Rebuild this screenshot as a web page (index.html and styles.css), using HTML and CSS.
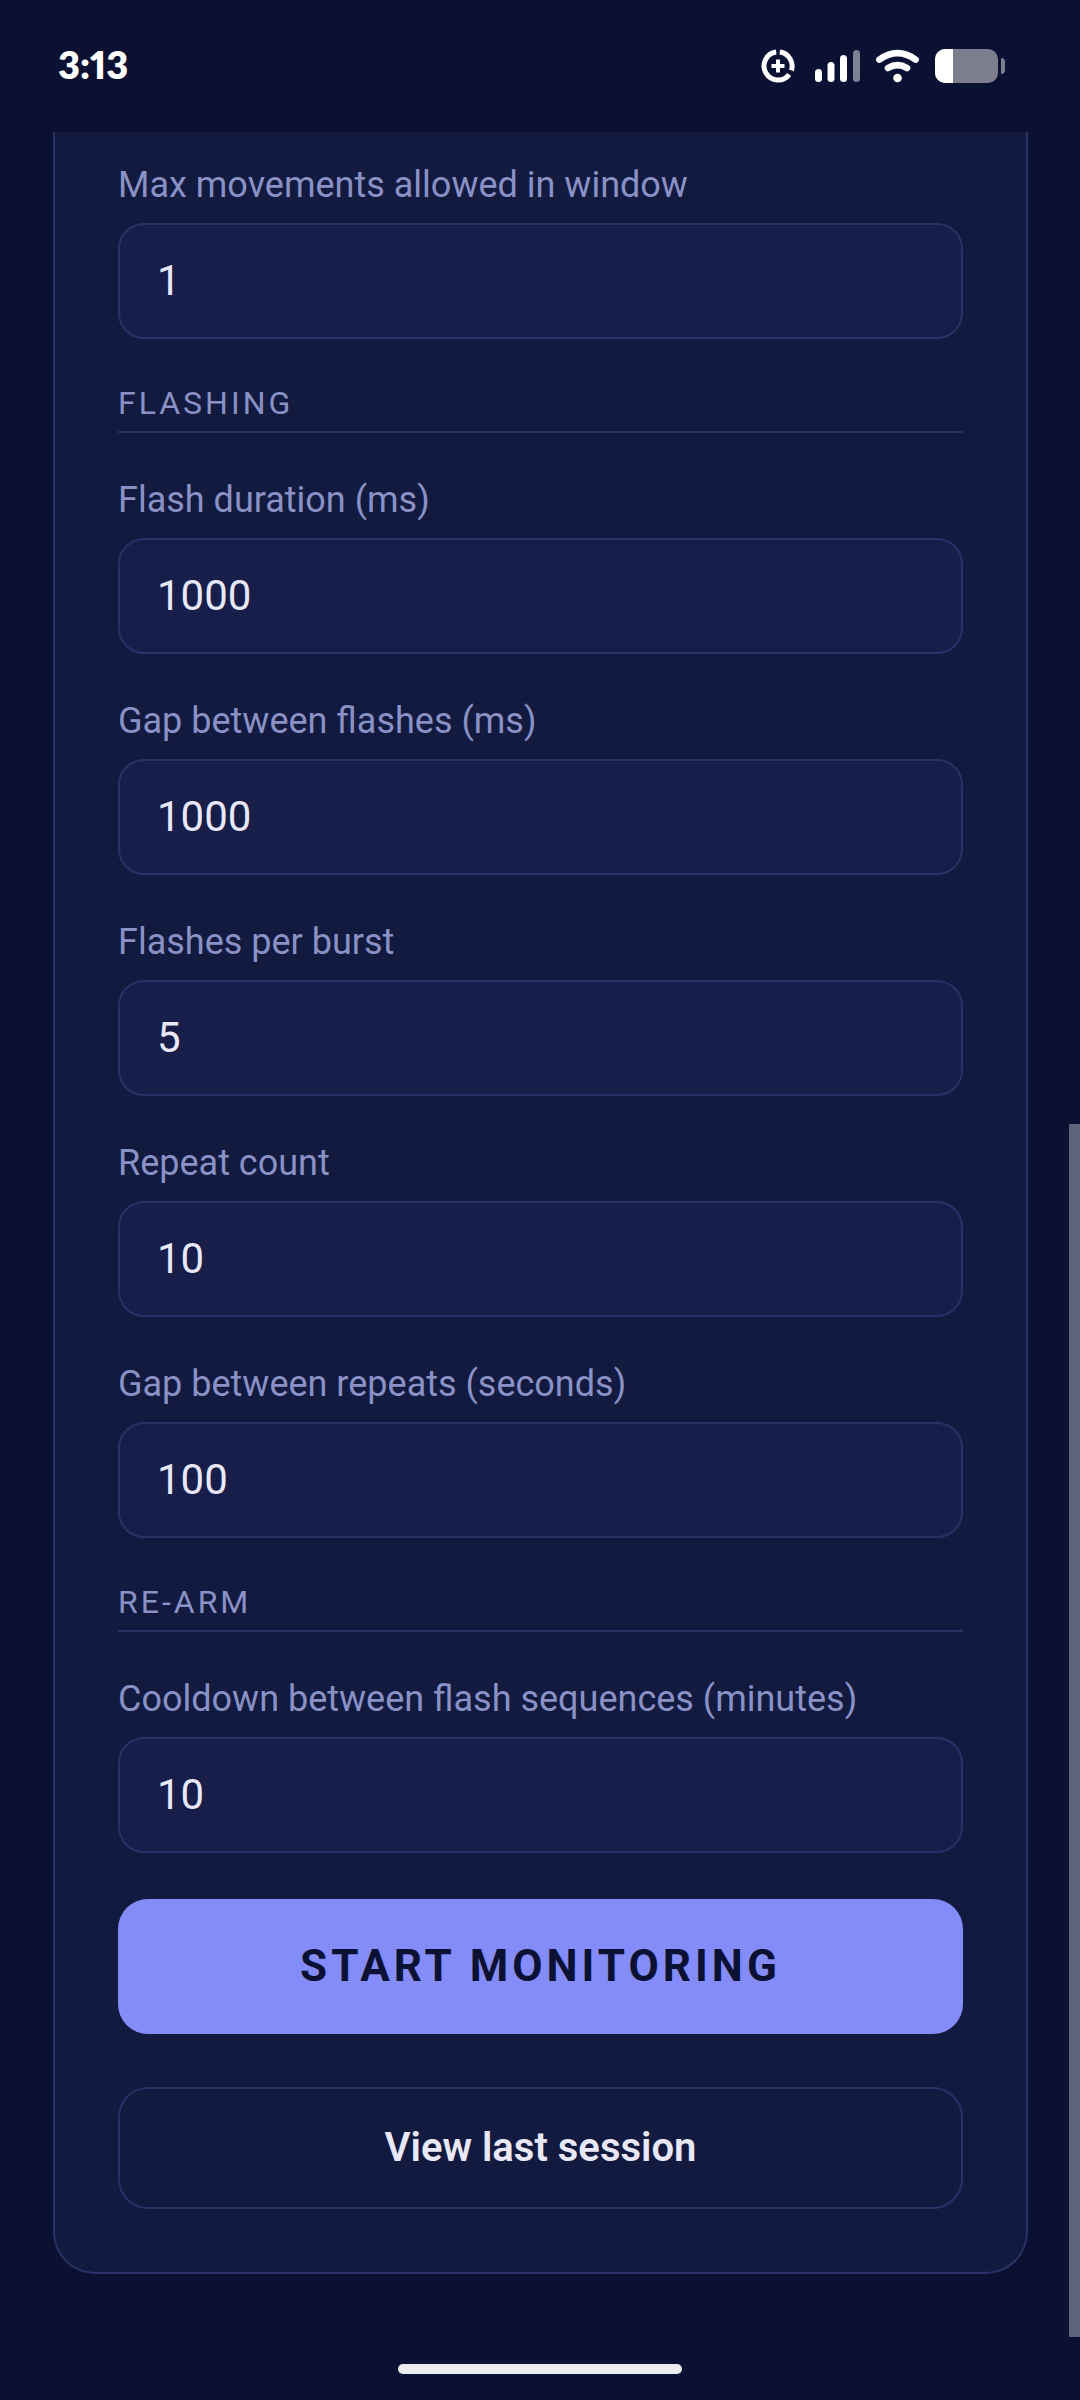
FILE: index.html
```html
<!DOCTYPE html>
<html lang="en">
<head>
<meta charset="UTF-8">
<meta name="viewport" content="width=device-width, initial-scale=1.0">
<title>Monitor settings</title>
<link rel="stylesheet" href="styles.css">
</head>
<body>

<header class="status-bar">
  <time class="clock">3:13</time>
  <div class="status-icons">
    <svg class="icon-saver" width="34" height="34" viewBox="0 0 34 34" fill="none" stroke="#fff">
      <path d="M18.8 3.1A14 14 0 0 1 30.4 21.4" stroke-width="5"/>
      <path d="M28.2 25.4A14 14 0 1 1 15.2 3.1" stroke-width="5"/>
      <path d="M17 10.5v13M10.5 17h13" stroke-width="4"/>
    </svg>
    <svg class="icon-signal" width="45" height="34" viewBox="0 0 45 34" fill="#fff">
      <rect x="0" y="20" width="7" height="13" rx="3.5"/>
      <rect x="12.5" y="13" width="7" height="20" rx="3.5"/>
      <rect x="25" y="6" width="7" height="27" rx="3.5"/>
      <rect x="38" y="1" width="7" height="32" rx="3.5" opacity=".47"/>
    </svg>
    <svg class="icon-wifi" width="43" height="34" viewBox="0 0 43 34" fill="none" stroke="#fff" stroke-linecap="round">
      <path d="M3.4 10.6Q21.5-2.2 39.6 10.6" stroke-width="6.6"/>
      <path d="M12 19Q21.5 13.2 31 19" stroke-width="6.6"/>
      <circle cx="21.5" cy="29" r="4.3" fill="#fff" stroke="none"/>
    </svg>
    <svg class="icon-battery" width="70" height="34" viewBox="0 0 70 34">
      <rect width="63" height="34" rx="10" fill="#7c7e8e"/>
      <path d="M18 0H10A10 10 0 0 0 0 10V24A10 10 0 0 0 10 34H18Z" fill="#fff"/>
      <path d="M66 9Q70 9 70 13V21Q70 25 66 25Z" fill="#7c7e8e"/>
    </svg>
  </div>
</header>

<main class="content">
  <form class="card">
    <div class="field">
      <label for="max-movements">Max movements allowed in window</label>
      <input type="text" inputmode="numeric" id="max-movements" value="1">
    </div>

    <h2 class="section">Flashing</h2>
    <div class="field">
      <label for="flash-duration">Flash duration (ms)</label>
      <input type="text" inputmode="numeric" id="flash-duration" value="1000">
    </div>
    <div class="field">
      <label for="flash-gap">Gap between flashes (ms)</label>
      <input type="text" inputmode="numeric" id="flash-gap" value="1000">
    </div>
    <div class="field">
      <label for="flash-count">Flashes per burst</label>
      <input type="text" inputmode="numeric" id="flash-count" value="5">
    </div>
    <div class="field">
      <label for="repeat-count">Repeat count</label>
      <input type="text" inputmode="numeric" id="repeat-count" value="10">
    </div>
    <div class="field">
      <label for="repeat-gap">Gap between repeats (seconds)</label>
      <input type="text" inputmode="numeric" id="repeat-gap" value="100">
    </div>

    <h2 class="section">Re-arm</h2>
    <div class="field">
      <label for="cooldown">Cooldown between flash sequences (minutes)</label>
      <input type="text" inputmode="numeric" id="cooldown" value="10">
    </div>

    <div class="actions">
      <button type="button" class="btn btn-primary">Start monitoring</button>
      <button type="button" class="btn btn-ghost">View last session</button>
    </div>
  </form>
  <div class="scroll-thumb"></div>
</main>

<footer class="nav-bar">
  <div class="nav-handle"></div>
</footer>

</body>
</html>
```

FILE: styles.css
```css
* {
  box-sizing: border-box;
}
:root {
  --bg: #0b1132;
  --card: #121a40;
  --input: #171e49;
  --border: #2a3166;
  --muted: #8a91c4;
  --text: #e8e8f8;
  --accent: #838cf8;
}
body {
  margin: 0;
  min-height: 100vh;
  display: flex;
  flex-direction: column;
  background: var(--bg);
  color: var(--text);
  font-family: Roboto, sans-serif;
}

/* Status bar */
.status-bar {
  display: flex;
  align-items: center;
  justify-content: space-between;
  height: 132px;
  padding: 0 75px 0 58px;
}
.clock {
  padding-bottom: 4px;
  color: #fff;
  font-family: Lato, sans-serif;
  font-size: 38px;
  font-weight: 800;
  font-variant-numeric: proportional-nums;
  line-height: 44px;
}
.status-icons {
  display: flex;
  align-items: center;
  gap: 16px;
}
.icon-saver {
  margin-right: 4px;
}

/* Settings card, scrolled to its end */
.content {
  position: relative;
  flex: 1;
  padding: 0 52px 63px 53px;
}
.card {
  padding: 32px 63px 63px;
  background: var(--card);
  border: 2px solid var(--border);
  border-top: 0;
  border-radius: 0 0 42px 42px;
}
.field {
  display: flex;
  flex-direction: column;
  gap: 17px;
  margin-bottom: 46px;
}
.field label {
  color: var(--muted);
  font-size: 36px;
  line-height: 42px;
}
.field input {
  width: 100%;
  height: 116px;
  padding: 0 37px 2px;
  background: var(--input);
  border: 2px solid var(--border);
  border-radius: 26px;
  color: var(--text);
  font-family: inherit;
  font-size: 42px;
  outline: none;
}
.section {
  margin: 0 0 46px;
  padding-bottom: 10px;
  border-bottom: 2px solid var(--border);
  color: var(--muted);
  font-size: 32px;
  font-weight: 400;
  line-height: 36px;
  letter-spacing: 3px;
  text-transform: uppercase;
}

.actions {
  display: flex;
  flex-direction: column;
  gap: 53px;
}
.btn {
  width: 100%;
  border-radius: 30px;
  font-family: inherit;
  cursor: pointer;
}
.btn-primary {
  padding: 41px 42px 42px;
  background: var(--accent);
  border: 0;
  color: var(--bg);
  font-size: 44px;
  font-weight: 700;
  line-height: 52px;
  letter-spacing: 4px;
  text-transform: uppercase;
}
.btn-ghost {
  padding: 36px;
  background: transparent;
  border: 2px solid var(--border);
  color: var(--text);
  font-size: 40px;
  font-weight: 600;
  line-height: 46px;
}

.scroll-thumb {
  position: absolute;
  top: 45%;
  right: 0;
  bottom: 0;
  width: 11px;
  background: #5f6379;
}

/* Gesture bar */
.nav-bar {
  display: flex;
  align-items: center;
  justify-content: center;
  height: 63px;
}
.nav-handle {
  width: 284px;
  height: 10px;
  border-radius: 5px;
  background: #ececee;
}
```
